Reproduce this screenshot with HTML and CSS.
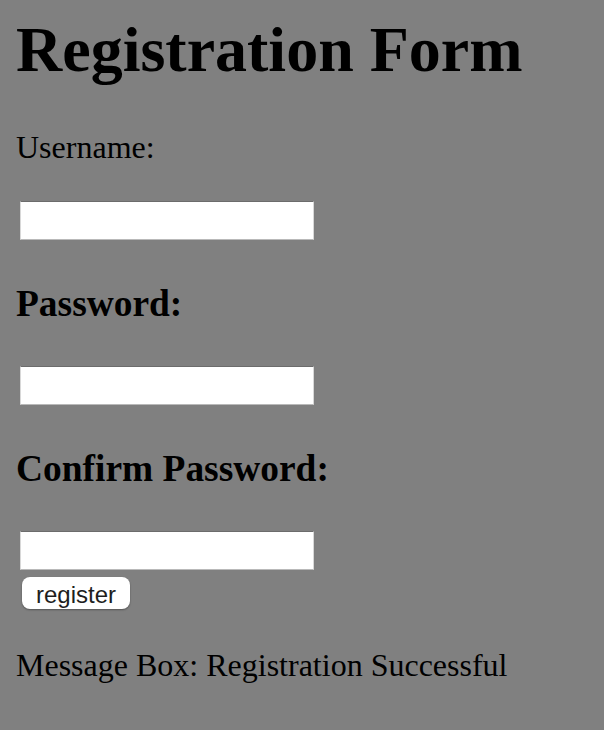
FILE: index.html
```
<!DOCTYPE html>
<html>
<head>
<meta charset="utf-8">
<title>Registration Form</title>
<link rel="stylesheet" href="styles.css">
</head>
<body>
<div class="page">
  <h1 class="title">Registration Form</h1>
  <p class="label">Username:</p>
  <input class="field field-first" type="text">
  <h3 class="heading">Password:</h3>
  <input class="field" type="password">
  <h3 class="heading">Confirm Password:</h3>
  <input class="field" type="password">
  <button class="btn" type="button">register</button>
  <p class="message">Message Box: Registration Successful</p>
</div>
</body>
</html>
```
FILE: styles.css
```
html, body {
  margin: 0;
  padding: 0;
  background: #808080;
}
body {
  font-family: "Liberation Serif", "Times New Roman", serif;
  color: #000;
}
.page {
  display: flex;
  flex-direction: column;
  align-items: flex-start;
  padding: 0 16px;
}
.title {
  font-size: 64px;
  font-weight: bold;
  line-height: 74px;
  margin: 13px 0 0;
}
.label {
  font-size: 32px;
  line-height: 37px;
  margin: 42px 0 0;
}
.field {
  display: block;
  box-sizing: border-box;
  width: 294px;
  height: 39px;
  margin: 41px 0 0 4px;
  padding: 0 4px;
  background: #fff;
  border: 1px solid #a8a8a8;
  border-top-color: #6c6c6c;
  border-left-color: #d8d8d8;
  border-right-color: #d8d8d8;
  border-bottom-color: #b9b9b9;
  border-radius: 0;
  outline: none;
}
.field-first {
  margin-top: 35px;
}
.heading {
  font-size: 37.44px;
  font-weight: bold;
  line-height: 43px;
  margin: 42px 0 0;
}
.btn {
  display: block;
  box-sizing: border-box;
  width: 108px;
  height: 32px;
  margin: 7px 0 0 6px;
  padding: 3px 0 0;
  background: #fff;
  border: none;
  border-radius: 8px;
  box-shadow: 0 1px 2px rgba(0, 0, 0, 0.35);
  font-family: "Liberation Sans", Arial, sans-serif;
  font-size: 24px;
  line-height: 29px;
  color: #1e1e1e;
}
.message {
  font-size: 32px;
  line-height: 37px;
  margin: 38px 0 0;
}
```
